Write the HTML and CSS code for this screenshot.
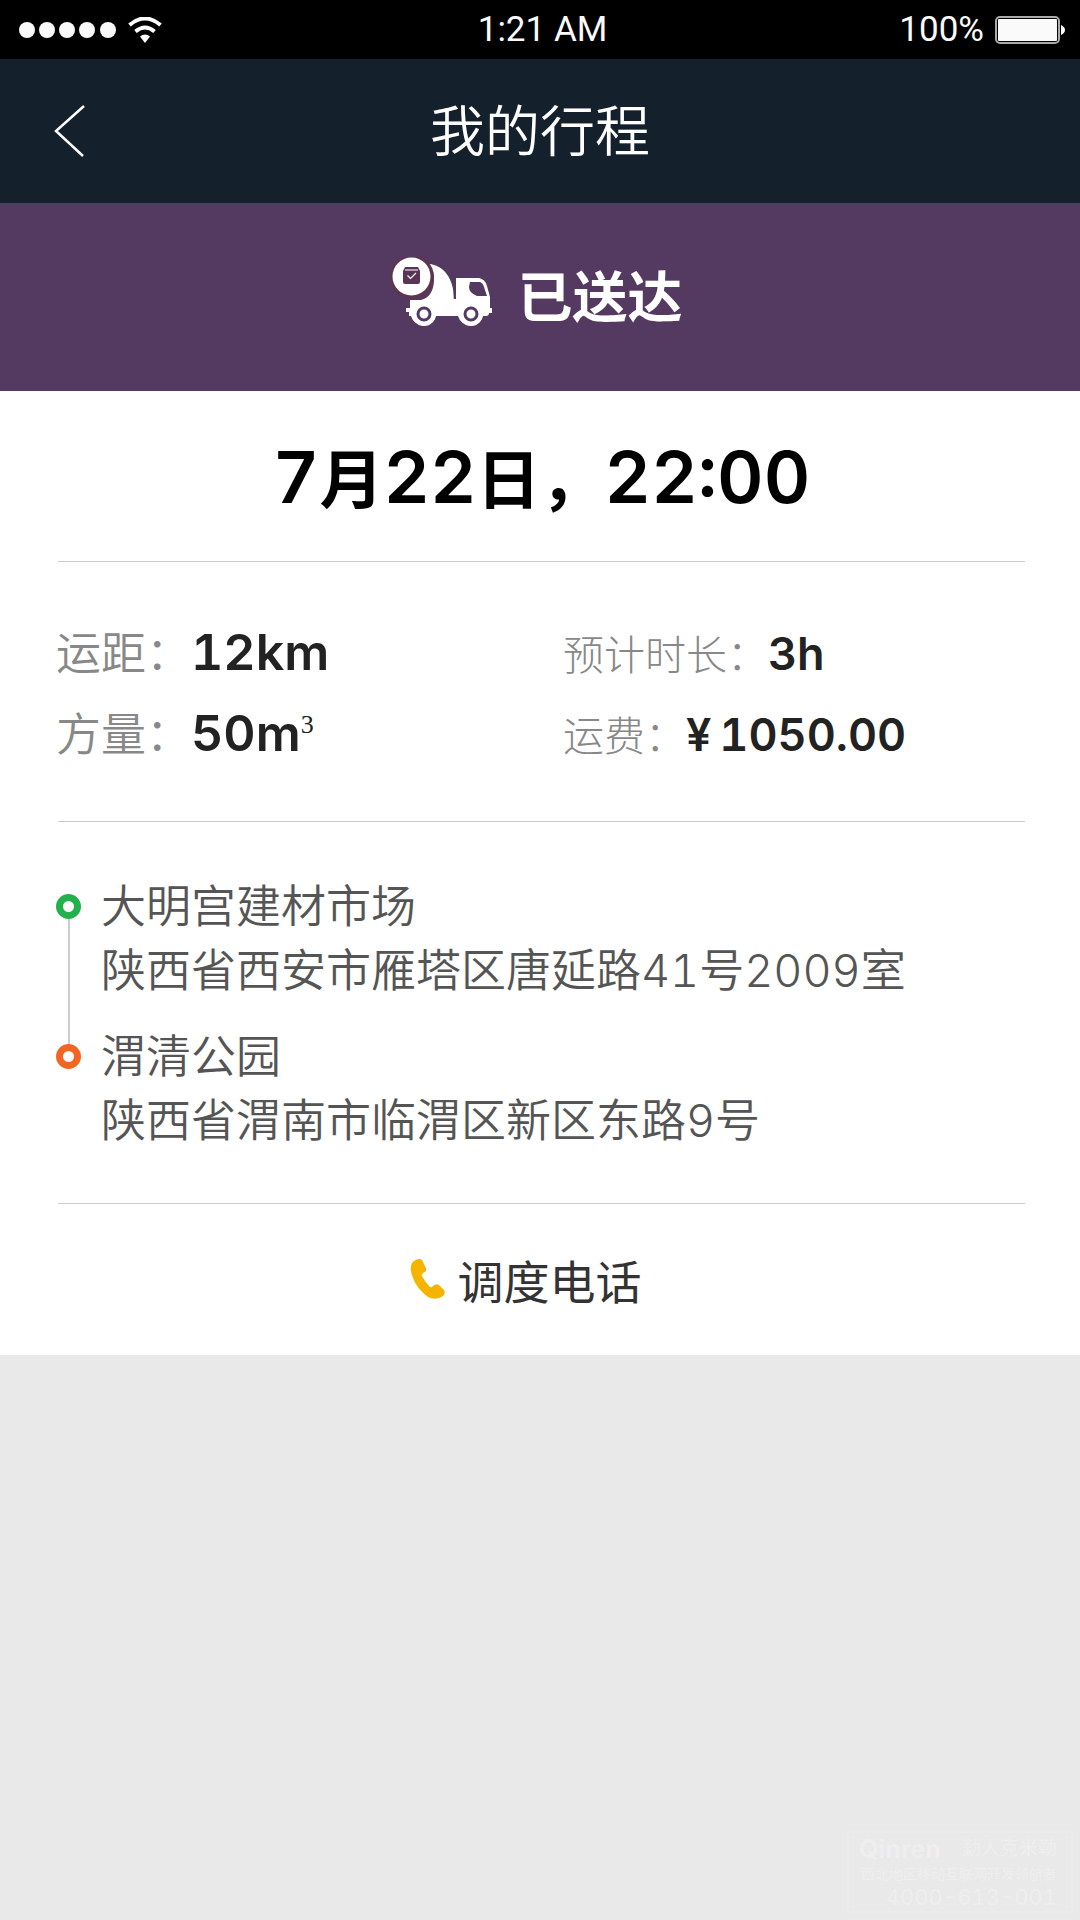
FILE: index.html
```html
<!DOCTYPE html>
<html lang="zh-CN">
<head>
<meta charset="utf-8">
<meta name="viewport" content="width=device-width, initial-scale=1">
<title>我的行程</title>
<link rel="stylesheet" href="styles.css">
</head>
<body>
<div class="status">
  <div class="status-side">
    <svg class="signal" viewBox="0 0 98 18" aria-hidden="true"><circle cx="8" cy="9" r="8"/><circle cx="28" cy="9" r="8"/><circle cx="48" cy="9" r="8"/><circle cx="68" cy="9" r="8"/><circle cx="89" cy="9" r="8"/></svg>
    <svg class="wifi" viewBox="0 0 34 26" aria-hidden="true"><path d="M1.500 8Q17-5 32.500 8" fill="none" stroke="#fff" stroke-width="4"/><path d="M7.500 14.500Q17 6.500 26.500 14.500" fill="none" stroke="#fff" stroke-width="4"/><path d="M12 19.500Q17 15.500 22 19.500L17 26Z" fill="#fff"/></svg>
  </div>
  <span>1:21 AM</span>
  <div class="status-side status-right">
    <span>100%</span>
    <svg class="battery" viewBox="0 0 71 28" aria-hidden="true"><rect x="1" y="1" width="63" height="26" rx="4" fill="none" stroke="#aaa" stroke-width="2"/><rect x="3" y="3" width="59" height="22" rx="1" fill="#fafafa"/><path d="M66 9Q70 11 70 14T66 19Z" fill="#fff"/></svg>
  </div>
</div>
<header class="header">
  <button class="back" type="button" aria-label="返回"><svg viewBox="0 0 32 52" aria-hidden="true"><path d="M30 1L2 26L29 51" fill="none" stroke="#fff" stroke-width="2.500"/></svg></button>
  <h1>我的行程</h1>
</header>
<main>
  <section class="banner">
    <svg class="truck" viewBox="0 0 102 72" aria-hidden="true">
      <path d="M38 7C52 8 63 21 63 42H65V21H88Q94 22 96 29L99 40V51H101V56H98Q98 59 95 59H92A13 13 0 0 1 67 59H45A13 13 0 0 1 20 59H18V55H15V51H19V43H30Q42 40 43 24Q43 14 38 7Z" fill="#fff"/>
      <path d="M79 25H89Q92 26 93 30L96 39H86Q78 36 78 30Z" fill="#543a60"/>
      <path d="M63.500 20V42" stroke="#543a60" stroke-width="1.500"/>
      <circle cx="33" cy="57" r="12" fill="#fff"/><circle cx="33" cy="57" r="6" fill="#fff" stroke="#543a60" stroke-width="3"/>
      <circle cx="80" cy="57" r="12" fill="#fff"/><circle cx="80" cy="57" r="6" fill="#fff" stroke="#543a60" stroke-width="3"/>
      <circle cx="21" cy="20" r="22" fill="#5f344f"/><circle cx="20.500" cy="19.500" r="19" fill="#fff"/>
      <path d="M12 14L14 10H27L29 14V25Q29 27 27 27H14Q12 27 12 25Z" fill="#5b3455"/>
      <path d="M14 13H27M16.500 18.500L19.500 21.500L25 16" fill="none" stroke="#fff" stroke-width="1.200"/>
    </svg>
    <strong>已送达</strong>
  </section>
  <div class="card">
    <h2 class="date"><span class="num">7</span>月<span class="num">22</span>日，<span class="num">22:00</span></h2>
    <dl class="facts">
      <div class="fact"><dt>运距：</dt><dd>12km</dd></div>
      <div class="fact fact-small"><dt>预计时长：</dt><dd>3h</dd></div>
      <div class="fact"><dt>方量：</dt><dd>50m<sup>3</sup></dd></div>
      <div class="fact fact-small"><dt>运费：</dt><dd><span class="yen">¥</span>1050.00</dd></div>
    </dl>
    <ol class="route">
      <li class="stop from"><p>大明宫建材市场</p><p>陕西省西安市雁塔区唐延路41号2009室</p></li>
      <li class="stop to"><p>渭清公园</p><p>陕西省渭南市临渭区新区东路9号</p></li>
    </ol>
    <a class="call" href="tel:4000613001">
      <svg viewBox="0 0 36 42" aria-hidden="true"><path d="M2 5Q5 1 10 1Q12 1 13 4L16 10Q17 14 13 15Q11 16 12 18Q15 24 20 29Q22 30 23 28Q26 25 29 27L34 32Q36 35 33 38Q26 43 18 39Q7 31 3 20Q-1 10 2 5Z" fill="#f5b400"/></svg>
      <span>调度电话</span>
    </a>
  </div>
</main>
<footer class="mark">
  <p class="mark-brand"><b>Qinren</b>勤人克米勒</p>
  <p class="mark-line">西北地区移动互联网开发领航者</p>
  <p class="mark-phone">4000-613-001</p>
</footer>
</body>
</html>
```
FILE: styles.css
```css
* { box-sizing: border-box; margin: 0; padding: 0; }
body {
  display: flex;
  flex-direction: column;
  min-height: 100vh;
  background: #e9e9e9;
  color: #222;
  font-family: Inter, "Noto Sans CJK SC", sans-serif;
  font-variant-numeric: tabular-nums;
}
.status {
  display: grid;
  grid-template-columns: 1fr auto 1fr;
  align-items: center;
  height: 59px;
  padding: 0 14px 0 19px;
  background: #000;
  color: #fafafa;
  font: 35px/58px Roboto, sans-serif;
}
.status-side { display: flex; align-items: center; gap: 11px; }
.status-right { justify-content: flex-end; }
.signal { width: 98px; height: 18px; fill: #fafafa; }
.wifi { width: 34px; height: 26px; }
.battery { width: 71px; height: 28px; }
.header {
  display: grid;
  grid-template-columns: 1fr auto 1fr;
  align-items: center;
  height: 144px;
  padding: 0 54px;
  background: #15202d;
  color: #fff;
}
.header h1 { font-size: 55px; font-weight: 350; line-height: 80px; }
.back { width: 32px; height: 52px; border: 0; background: none; cursor: pointer; }
.back svg { display: block; width: 32px; height: 52px; }
.banner {
  display: flex;
  justify-content: center;
  align-items: center;
  gap: 24px;
  height: 188px;
  padding-right: 6px;
  background: #543a60;
  color: #fff;
  font-size: 55px;
  line-height: 80px;
}
.truck { width: 102px; height: 72px; margin-bottom: 8px; }
.card { padding: 0 55px 0 58px; background: #fff; }
.date {
  height: 171px;
  padding-top: 38px;
  border-bottom: 1px solid #ccc;
  color: #000;
  font-size: 64px;
  font-weight: 600;
  line-height: 96px;
  text-align: center;
}
.num { font-size: 72px; }
.facts {
  display: grid;
  grid-template-columns: 507px 1fr;
  padding: 50px 0 47px;
  border-bottom: 1px solid #ccc;
}
.fact { display: flex; align-items: baseline; height: 81px; margin-left: -2px; line-height: 80px; white-space: nowrap; }
.fact dt { color: #888; font-size: 45px; font-weight: 350; }
.fact dd { font-size: 50px; font-weight: 600; }
.fact-small { padding-top: 2px; }
.fact-small dt { font-size: 41px; font-weight: 300; }
.fact-small dd { font-size: 45px; }
.fact sup { font: 26px/1 "Liberation Serif", serif; vertical-align: 18px; }
.yen { margin-right: 8px; }
.route {
  padding: 53px 0 50px;
  border-bottom: 1px solid #ccc;
  color: #555;
  font-size: 45px;
  font-weight: 350;
  line-height: 64px;
  list-style: none;
}
.stop { position: relative; padding-left: 43px; }
.from { padding-bottom: 22px; }
.stop::before {
  content: "";
  position: absolute;
  z-index: 1;
  top: 19px;
  left: -2px;
  box-sizing: border-box;
  width: 25px;
  height: 25px;
  border: 7px solid #22b14c;
  border-radius: 50%;
  background: #fff;
}
.to::before { border-color: #f26522; }
.from::after {
  content: "";
  position: absolute;
  top: 44px;
  bottom: -20px;
  left: 10px;
  width: 2px;
  background: #ccc;
}
.call {
  display: flex;
  justify-content: center;
  align-items: center;
  gap: 12px;
  height: 151px;
  padding: 0 32px 2px 0;
  color: #333;
  font-size: 46px;
  text-decoration: none;
}
.call svg { width: 36px; height: 42px; }
.mark {
  width: 226px;
  margin: auto 7px 7px auto;
  padding: 2px 14px 2px 10px;
  border: 2px solid #ebebeb;
  color: #eee;
  text-align: right;
  white-space: nowrap;
}
.mark-brand { display: flex; justify-content: space-between; align-items: center; font-size: 19px; line-height: 28px; }
.mark-brand b { font-size: 25px; }
.mark-line { font-size: 14px; line-height: 22px; }
.mark-phone { font-size: 22px; line-height: 24px; }
```
